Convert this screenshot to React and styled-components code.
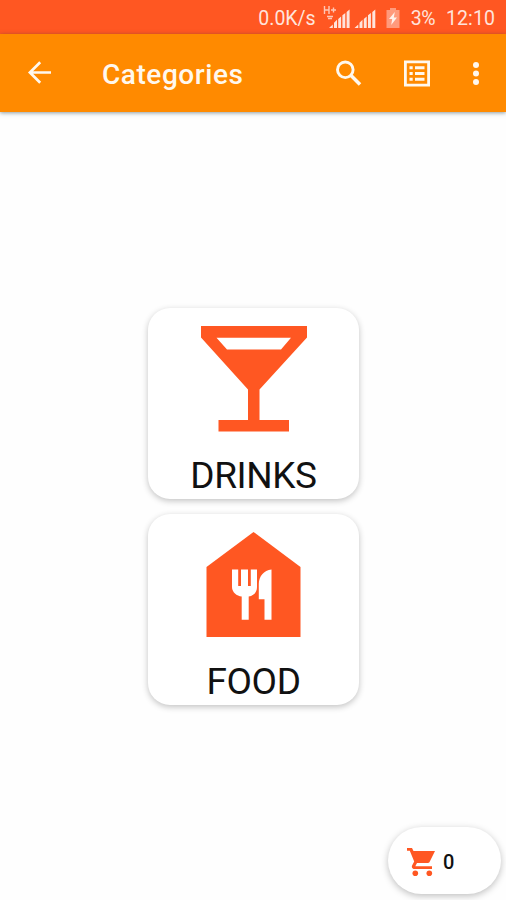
import React from 'react';
import styled, { createGlobalStyle } from 'styled-components';

const GlobalStyle = createGlobalStyle`
  * { box-sizing: border-box; }
  body { margin: 0; background: #fefefe; font-family: Roboto, sans-serif; }
  svg { display: block; flex: none; }
`;

const Screen = styled.div`
  width: 506px;
  height: 900px;
  display: flex;
  flex-direction: column;
  overflow: hidden;
  background: #fefefe;
`;

const StatusBar = styled.div`
  height: 34px;
  flex: none;
  display: flex;
  align-items: center;
  justify-content: flex-end;
  padding: 3px 11px 0 0;
  background: #ff5722;
  color: #ffe4dc;
`;

const StatusText = styled.span`
  font-size: 19.5px;
  line-height: 31px;
  letter-spacing: ${(p) => p.$spacing || 0}px;
  margin-left: ${(p) => p.$gap || 0}px;
  white-space: nowrap;
`;

const SignalIcon = styled.svg`
  margin: -3px 0 0 7px;
`;

const BatteryIcon = styled.svg`
  margin: -1px 0 0 9px;
`;

const AppBar = styled.header`
  height: 78px;
  flex: none;
  display: flex;
  align-items: center;
  padding: 0 7px 0 23px;
  background: #ff8a00;
  color: #fff8ee;
  box-shadow: 0 1px 4px rgba(30, 55, 65, 0.5);
`;

const IconButton = styled.button`
  width: 32px;
  height: 32px;
  flex: none;
  padding: 0;
  border: 0;
  background: none;
  color: inherit;
`;

const Title = styled.h1`
  flex: 1;
  margin: 4px 0 0 47px;
  font-size: 28px;
  line-height: 36px;
  font-weight: 500;
  letter-spacing: 0.55px;
`;

const Actions = styled.div`
  display: flex;
  gap: 36px;
  margin-right: -2px;
`;

const Content = styled.main`
  flex: 1;
  display: flex;
  flex-direction: column;
  align-items: center;
  gap: 15px;
  padding: 196px 0 0 1px;
`;

const Card = styled.section`
  width: 211px;
  height: 191px;
  display: flex;
  flex-direction: column;
  align-items: center;
  padding-top: 18px;
  border-radius: 22px;
  background: #fff;
  box-shadow: 0 2px 6px rgba(0, 0, 0, 0.24);
`;

const CardLabel = styled.span`
  margin-top: 22px;
  color: #111;
  font-size: 37px;
  line-height: 43px;
  letter-spacing: -0.4px;
`;

const Footer = styled.footer`
  flex: none;
  display: flex;
  justify-content: flex-end;
  padding: 0 5px 6px 0;
`;

const CartButton = styled.button`
  width: 113px;
  height: 67px;
  display: flex;
  align-items: center;
  gap: 7px;
  padding: 2px 0 0 18px;
  border: 0;
  border-radius: 34px;
  background: #fff;
  color: #111;
  font: 500 20px Roboto, sans-serif;
  box-shadow: 0 2px 7px rgba(0, 0, 0, 0.25);
`;

function Signal() {
  return (
    <SignalIcon width="54" height="24" viewBox="0 0 54 24" fill="none" stroke="#ffe4dc">
      <path strokeWidth="1.4" d="M1.5 1v8M6 1v8M1.5 5H6M8 5h5M10.5 2.5v5M4 11.5h6M5 13.5h4" opacity=".8" />
      <path fill="#ffe4dc" stroke="none" d="M6 23l3.8-3.5V23zM11 23v-5.2l3-3V23zM15.2 23v-9l2.9-2.4V23zM19.4 23V10.2L22.3 8v15zM23.6 23V7l3-2.4V23zM31.5 23l3.8-3.5V23zM36.5 23v-5.2l3-3V23zM40.8 23v-9l2.9-2.4V23zM45 23V10.2L47.9 8v15zM49.3 23V7l3-2.4V23z" />
    </SignalIcon>
  );
}

function Battery() {
  return (
    <BatteryIcon width="14" height="20" viewBox="0 0 14 20">
      <path fill="#ff9a7c" d="M4 0h6v2h3.5v18H.5V2H4z" />
      <path fill="#fff2ec" d="M8.8 4 3 11h3.2L5.2 17l5.8-7.5H7.8z" />
    </BatteryIcon>
  );
}

function Glass() {
  return (
    <svg width="106" height="106" viewBox="0 0 106 106" fill="#ff5722">
      <path fillRule="evenodd" d="M0 0H106V11.5L58.5 63.5V94H88V105.5H17.5V94H47V63.5L0 11.5ZM15.5 11.8H90L80 23.5H26Z" />
    </svg>
  );
}

function FoodHouse() {
  return (
    <svg width="95" height="106" viewBox="0 0 94 106">
      <path fill="#ff5722" d="M47 0 94 35V105H0V35z" />
      <path fill="#fff" d="M25.5 37.5h6.2V54h2.8V37.5h7V54h2.8V37.5h6.2V55c0 5.2-3.3 9-8.3 9.5v23.2h-7V64.5c-5-.5-9.7-4.3-9.7-9.5z" />
      <path fill="#fff" d="M65 37.5v50.2h-7V67.3h-5.7V52c0-7.5 5-13.8 12.7-14.5z" />
    </svg>
  );
}

export default function App() {
  return (
    <>
      <GlobalStyle />
      <Screen>
        <StatusBar>
          <StatusText>0.0K/s</StatusText>
          <Signal />
          <Battery />
          <StatusText $gap={11} $spacing={-0.5}>3%</StatusText>
          <StatusText $gap={11} $spacing={0.1}>12:10</StatusText>
        </StatusBar>
        <AppBar>
          <IconButton aria-label="Back">
            <svg width="32" height="32" viewBox="0 0 32 32" fill="none" stroke="currentColor" strokeWidth="2.7">
              <path d="M28 15.5H7M17.2 5.2 6.9 15.5l10.3 10.3" />
            </svg>
          </IconButton>
          <Title>Categories</Title>
          <Actions>
            <IconButton aria-label="Search">
              <svg width="32" height="32" viewBox="0 0 32 32" fill="none" stroke="currentColor">
                <circle cx="12.3" cy="12.8" r="7.8" strokeWidth="2.9" />
                <path strokeWidth="3.5" d="m17.8 18.3 9.2 9.2" />
              </svg>
            </IconButton>
            <IconButton aria-label="List">
              <svg width="32" height="32" viewBox="0 0 32 32" fill="none" stroke="currentColor">
                <path strokeWidth="2.8" d="M4.4 4.9h23.2v23.2H4.4z" />
                <path strokeWidth="3" d="M8.5 10.8h3.2M14 10.8h9.5M8.5 16.5h3.2M14 16.5h9.5M8.5 22.2h3.2M14 22.2h9.5" />
              </svg>
            </IconButton>
            <IconButton aria-label="More">
              <svg width="32" height="32" viewBox="0 0 32 32" fill="currentColor">
                <circle cx="7" cy="8" r="3" />
                <circle cx="7" cy="16.5" r="3" />
                <circle cx="7" cy="25" r="3" />
              </svg>
            </IconButton>
          </Actions>
        </AppBar>
        <Content>
          <Card>
            <Glass />
            <CardLabel>DRINKS</CardLabel>
          </Card>
          <Card>
            <FoodHouse />
            <CardLabel>FOOD</CardLabel>
          </Card>
        </Content>
        <Footer>
          <CartButton>
            <svg width="30" height="30" viewBox="0 0 30 30" fill="#ff5722">
              <path d="M1 1h5l1.5 3H29l-5.3 10.7c-.5 1-1.4 1.4-2.4 1.4H11l-1.7 3.2H26v2.7H8.5c-2.2 0-3.3-2-2.3-3.8l2-3.6L3.8 3.7H1z" />
              <circle cx="9.3" cy="26.3" r="2.8" />
              <circle cx="23.3" cy="26.3" r="2.8" />
            </svg>
            <span>0</span>
          </CartButton>
        </Footer>
      </Screen>
    </>
  );
}
